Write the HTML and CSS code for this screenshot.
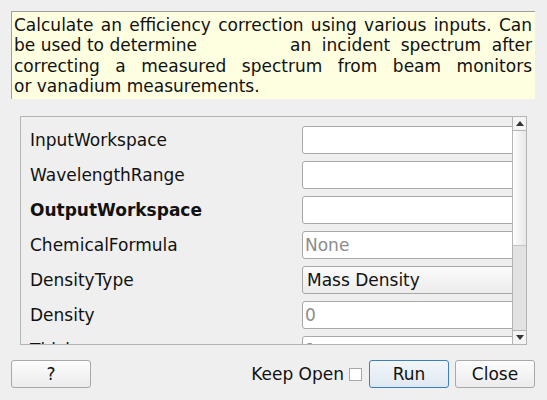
FILE: index.html
```
<!DOCTYPE html>
<html>
<head>
<meta charset="utf-8">
<link rel="stylesheet" href="styles.css">
</head>
<body>
<div class="dialog">
  <div class="desc">
    <div class="jl">Calculate an efficiency correction using various inputs. Can</div>
    <div class="line2"><span>be used to determine</span><span class="jl tail">an incident spectrum after</span></div>
    <div class="jl">correcting a measured spectrum from beam monitors</div>
    <div>or vanadium measurements.</div>
  </div>
  <div class="scrollarea">
    <div class="viewport">
      <div class="grid">
        <div class="label">InputWorkspace</div><div class="field"><div class="input"></div></div>
        <div class="label">WavelengthRange</div><div class="field"><div class="input"></div></div>
        <div class="label bold">OutputWorkspace</div><div class="field"><div class="input"></div></div>
        <div class="label">ChemicalFormula</div><div class="field"><div class="input ph">None</div></div>
        <div class="label">DensityType</div><div class="field"><div class="input combo">Mass Density</div></div>
        <div class="label">Density</div><div class="field"><div class="input ph">0</div></div>
        <div class="label">Thickness</div><div class="field"><div class="input ph">1</div></div>
      </div>
    </div>
    <div class="scrollbar">
      <div class="sbbtn up"><svg width="8" height="5" viewBox="0 0 8 5"><path d="M0 5 L4 0 L8 5 Z" fill="#333"/></svg></div>
      <div class="track"></div>
      <div class="handle"></div>
      <div class="sbbtn down"><svg width="8" height="5" viewBox="0 0 8 5"><path d="M0 0 L4 5 L8 0 Z" fill="#333"/></svg></div>
    </div>
  </div>
  <div class="buttons">
    <div class="btn help">?</div>
    <div class="spacer"></div>
    <div class="keep">Keep Open</div>
    <div class="check"></div>
    <div class="btn run">Run</div>
    <div class="btn close">Close</div>
  </div>
</div>
</body>
</html>
```
FILE: styles.css
```
html, body {
  margin: 0;
  padding: 0;
  background: #efefef;
}
body {
  width: 547px;
  height: 400px;
  overflow: hidden;
  font-family: "DejaVu Sans", sans-serif;
  font-size: 17px;
  color: #111;
}
.dialog {
  display: flex;
  flex-direction: column;
  padding: 11px 12px 0 11px;
}
.desc {
  background: #fefee0;
  border-top: 1px solid #a0a0a0;
  border-left: 1px solid #a0a0a0;
  padding: 3px 3px 3px 2px;
  line-height: 20.3px;
  height: 81px;
  white-space: nowrap;
}
.jl {
  text-align: justify;
  text-align-last: justify;
}
.line2 {
  display: flex;
}
.tail {
  margin-left: auto;
  width: 242px;
}
.scrollarea {
  margin: 17px 8px 0 9px;
  height: 227px;
  border: 1px solid #b4b4b4;
  display: flex;
}
.viewport {
  flex: 1;
  overflow: hidden;
}
.grid {
  display: grid;
  grid-template-columns: 272px 1fr;
  row-gap: 7px;
  padding: 9px 0 0 9px;
}
.label {
  height: 28px;
  line-height: 28px;
  white-space: nowrap;
}
.bold { font-weight: bold; }
.field {
  margin-right: -4px;
}
.input {
  height: 26px;
  line-height: 26px;
  border: 1px solid #a8a8a8;
  border-radius: 3px;
  background: #fff;
  padding: 0 2px;
  color: #111;
}
.ph { color: #8c8c8c; }
.combo {
  background: linear-gradient(#fbfbfb, #ececec);
  padding-left: 4px;
}
.scrollbar {
  width: 13px;
  border-left: 1px solid #b4b4b4;
  display: flex;
  flex-direction: column;
}
.sbbtn {
  height: 13px;
  display: flex;
  align-items: center;
  justify-content: center;
  background: #f4f4f4;
}
.up { border-bottom: 1px solid #b4b4b4; }
.down { border-top: 1px solid #b4b4b4; }
.track {
  height: 114px;
  background: linear-gradient(to right, #fdfdfd, #e8e8e8);
}
.handle {
  flex: 1;
  background: #e2e2e2;
  border-top: 1px solid #c4c4c4;
}
.buttons {
  margin-top: 15px;
  display: flex;
  align-items: center;
  height: 28px;
}
.btn {
  width: 78px;
  height: 26px;
  line-height: 26px;
  text-align: center;
  border: 1px solid #a8a8a8;
  border-radius: 3px;
  background: linear-gradient(#fcfcfc, #ececec);
}
.spacer { flex: 1; }
.keep { margin-right: 5px; }
.check {
  width: 11px;
  height: 11px;
  border: 1px solid #a8a8a8;
  background: #fff;
  margin-right: 7px;
}
.run {
  border-color: #3d7fbc;
  background: linear-gradient(#f2f6fa, #dfe8f1);
  margin-right: 6px;
}
```
